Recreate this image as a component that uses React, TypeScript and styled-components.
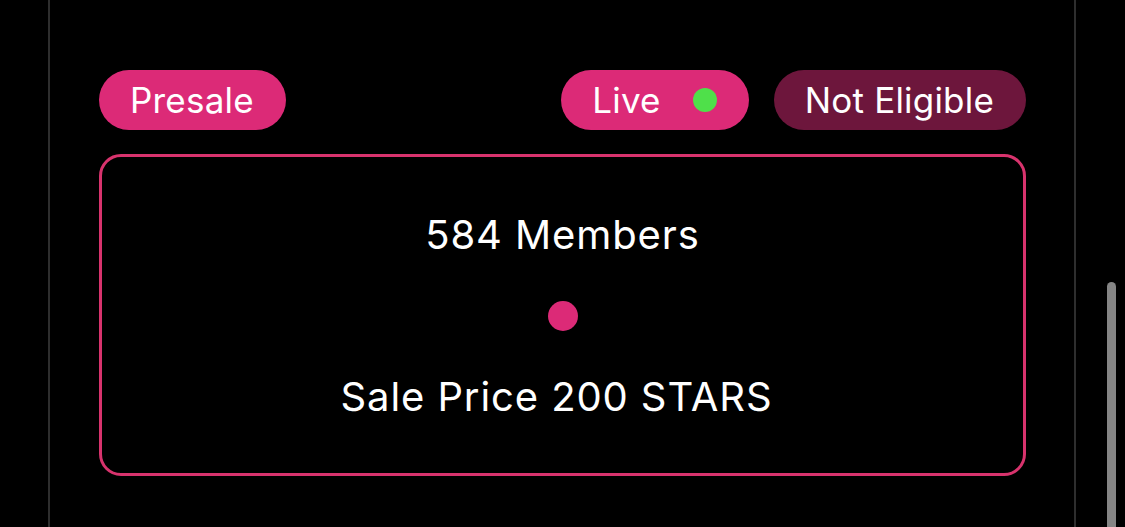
import styled, { createGlobalStyle } from 'styled-components';

const Global = createGlobalStyle`
    html, body {
        margin: 0;
        padding: 0;
        background: #000;
        height: 100%;
        overflow: hidden;
    }
    body {
        font-family: Inter, "Noto Sans", sans-serif;
        color: #fff;
    }
`;

const Screen = styled.div`
    position: relative;
    width: 1125px;
    height: 527px;
    background: #000;
`;

const Column = styled.div`
    margin-left: 48px;
    width: 1028px;
    height: 527px;
    border-left: 2px solid #2e2e2e;
    border-right: 2px solid #2e2e2e;
    padding: 70px 48px 0 49px;
    box-sizing: border-box;
`;

const Row = styled.div`
    display: flex;
    align-items: center;
    gap: 25px;
`;

const Spacer = styled.div`
    flex: 1;
`;

interface PillProps {
    dim?: boolean;
}

const Pill = styled.div<PillProps>`
    height: 60px;
    border-radius: 30px;
    padding: 0 32px 0 31px;
    display: flex;
    align-items: center;
    gap: 32px;
    font-size: 35px;
    letter-spacing: 0.2px;
    background: ${(props) => (props.dim ? '#6d163c' : '#dc2a77')};
    color: #fff;
    box-sizing: border-box;
    white-space: nowrap;
`;

const LiveDot = styled.span`
    width: 24px;
    height: 24px;
    border-radius: 50%;
    background: #4fe04a;
`;

const Card = styled.div`
    margin-top: 24px;
    height: 322px;
    border: 3px solid #d8336d;
    border-radius: 22px;
    box-sizing: border-box;
    display: flex;
    flex-direction: column;
    align-items: center;
    padding-top: 54px;
`;

interface LineProps {
    shift?: number;
}

const Line = styled.div<LineProps>`
    font-size: 40px;
    line-height: 48px;
    letter-spacing: 0.9px;
    white-space: nowrap;
    padding-right: ${(props) => props.shift ?? 0}px;
`;

const Dot = styled.div`
    width: 30px;
    height: 30px;
    border-radius: 50%;
    background: #dc2a77;
    margin: 42px 0;
`;

const Scrollbar = styled.div`
    position: absolute;
    left: 1107px;
    top: 282px;
    width: 9px;
    height: 260px;
    border-radius: 5px;
    background: #858585;
`;

export default function App() {
    return (
        <Screen>
            <Global />
            <Column>
                <Row>
                    <Pill>Presale</Pill>
                    <Spacer />
                    <Pill>
                        Live
                        <LiveDot />
                    </Pill>
                    <Pill dim>Not Eligible</Pill>
                </Row>
                <Card>
                    <Line>584 Members</Line>
                    <Dot />
                    <Line shift={12}>Sale Price 200 STARS</Line>
                </Card>
            </Column>
            <Scrollbar />
        </Screen>
    );
}
